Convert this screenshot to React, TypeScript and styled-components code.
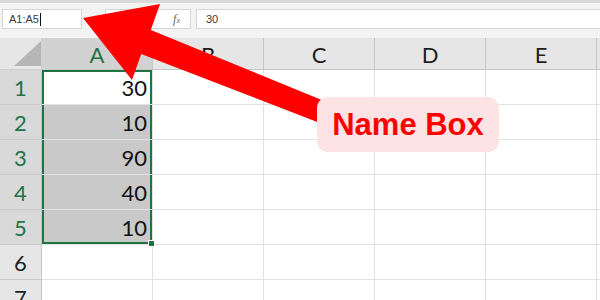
import React from "react";
import styled, { createGlobalStyle } from "styled-components";

const Global = createGlobalStyle`
  html, body { margin: 0; padding: 0; background: #ffffff; overflow: hidden; }
  body { width: 600px; height: 300px; font-family: "Liberation Sans", Arial, sans-serif; }
`;

const Page = styled.div`
  position: relative;
  width: 600px;
  height: 300px;
  overflow: hidden;
  background: #ffffff;
`;

const Toolbar = styled.div`
  height: 38px;
  box-sizing: border-box;
  background: #f3f3f3;
  border-top: 3px solid #d9d9d9;
  padding: 6px 0 0 2px;
  display: flex;
  align-items: flex-start;
`;

const Field = styled.div<{ $w?: number; $gap?: number }>`
  box-sizing: border-box;
  height: 20px;
  ${(p) => (p.$w ? `width: ${p.$w}px; flex: none;` : "flex: 1;")}
  margin-right: ${(p) => p.$gap ?? 0}px;
  background: #ffffff;
  border: 1px solid #d6d6d6;
  display: flex;
  align-items: center;
  padding: 0 6px;
  font-size: 11px;
  color: #3a3a3a;
`;

const Formula = styled(Field)`
  padding-left: 9px;
  border-right: none;
`;

const Caret = styled.span`
  display: inline-block;
  width: 1px;
  height: 13px;
  background: #111;
  margin-left: 1px;
`;

const Fx = styled.span`
  margin-left: auto;
  margin-right: 4px;
  font-family: "Liberation Serif", serif;
  font-style: italic;
  font-size: 12px;
  color: #666;
  small { font-size: 8px; }
`;

const Sheet = styled.div`
  display: grid;
  grid-template-columns: 42px repeat(5, 111px) 1fr;
  grid-template-rows: 32px repeat(7, 35px);
  font-family: Lato, "Liberation Sans", sans-serif;
`;

const Corner = styled.div`
  box-sizing: border-box;
  background: #e6e6e6;
  border-right: 1px solid #cfcfcf;
  border-bottom: 1px solid #cfcfcf;
  display: flex;
  align-items: flex-end;
  justify-content: flex-end;
  padding-bottom: 3px;
`;

const Triangle = styled.div`
  width: 0;
  height: 0;
  border-left: 27px solid transparent;
  border-bottom: 25px solid #b6b6b6;
`;

const ColHead = styled.div<{ $sel?: boolean }>`
  box-sizing: border-box;
  background: ${(p) => (p.$sel ? "#d2d2d2" : "#e6e6e6")};
  border-right: 1px solid #c6c6c6;
  border-bottom: 1px solid #c6c6c6;
  display: flex;
  align-items: center;
  justify-content: center;
  font-size: 22px;
  padding-top: 2px;
  color: ${(p) => (p.$sel ? "#217346" : "#1e1e1e")};
`;

const RowHead = styled.div<{ $sel?: boolean }>`
  box-sizing: border-box;
  background: ${(p) => (p.$sel ? "#d9d9d9" : "#e6e6e6")};
  border-right: 1px solid #c6c6c6;
  border-bottom: 1px solid #c9c9c9;
  display: flex;
  align-items: center;
  justify-content: center;
  font-size: 22px;
  color: ${(p) => (p.$sel ? "#217346" : "#1e1e1e")};
`;

const Cell = styled.div<{ $fill?: boolean; $top?: boolean; $bottom?: boolean; $sel?: boolean }>`
  position: relative;
  box-sizing: border-box;
  background: ${(p) => (p.$fill ? "#c9c9c9" : "#ffffff")};
  border-right: 1px solid #e1e1e1;
  border-bottom: 1px solid #e1e1e1;
  display: flex;
  align-items: center;
  justify-content: flex-end;
  padding-right: 5px;
  font-size: 22px;
  color: #111;
  box-shadow: ${(p) =>
    p.$sel
      ? [
          "inset 2px 0 0 #217346",
          "inset -2px 0 0 #217346",
          p.$top ? "inset 0 2px 0 #217346" : "",
          p.$bottom ? "inset 0 -2px 0 #217346" : "",
        ]
          .filter(Boolean)
          .join(", ")
      : "none"};
`;

const Handle = styled.span`
  position: absolute;
  right: -3px;
  bottom: -3px;
  width: 5px;
  height: 5px;
  background: #217346;
  border: 1px solid #ffffff;
  z-index: 2;
`;

const Overlay = styled.svg`
  position: absolute;
  left: 0;
  top: 0;
  pointer-events: none;
`;

const Callout = styled.div`
  position: absolute;
  left: 317px;
  top: 97px;
  width: 182px;
  height: 55px;
  box-sizing: border-box;
  border-radius: 11px;
  background: #fde3e3;
  display: flex;
  align-items: center;
  justify-content: center;
  font-family: "Liberation Sans", Arial, sans-serif;
  font-weight: 700;
  font-size: 31px;
  color: #ff0000;
`;

const cols = ["A", "B", "C", "D", "E", ""];
const values: Record<number, string> = { 1: "30", 2: "10", 3: "90", 4: "40", 5: "10" };

export default function App() {
  const rows = [1, 2, 3, 4, 5, 6, 7];
  return (
    <Page>
      <Global />
      <Toolbar>
        <Field $w={80} $gap={23}>
          A1:A5
          <Caret />
        </Field>
        <Field $w={86} $gap={5}>
          <Fx>
            f<small>x</small>
          </Fx>
        </Field>
        <Formula>30</Formula>
      </Toolbar>
      <Sheet>
        <Corner>
          <Triangle />
        </Corner>
        {cols.map((c, i) => (
          <ColHead key={"h" + i} $sel={c === "A"}>
            {c}
          </ColHead>
        ))}
        {rows.map((r) => (
          <React.Fragment key={r}>
            <RowHead $sel={r <= 5}>{r}</RowHead>
            <Cell
              $sel={r <= 5}
              $fill={r >= 2 && r <= 5}
              $top={r === 1}
              $bottom={r === 5}
            >
              {values[r] ?? ""}
              {r === 5 && <Handle />}
            </Cell>
            {cols.slice(1).map((c, i) => (
              <Cell key={r + "-" + i} />
            ))}
          </React.Fragment>
        ))}
      </Sheet>
      <Overlay width={600} height={300} viewBox="0 0 600 300">
        <polygon
          points="83,18 160,4 150.8,29.9 326.1,101.8 317.9,122.2 141.2,54.1 132,80"
          fill="#ff0000"
        />
      </Overlay>
      <Callout>Name Box</Callout>
    </Page>
  );
}
